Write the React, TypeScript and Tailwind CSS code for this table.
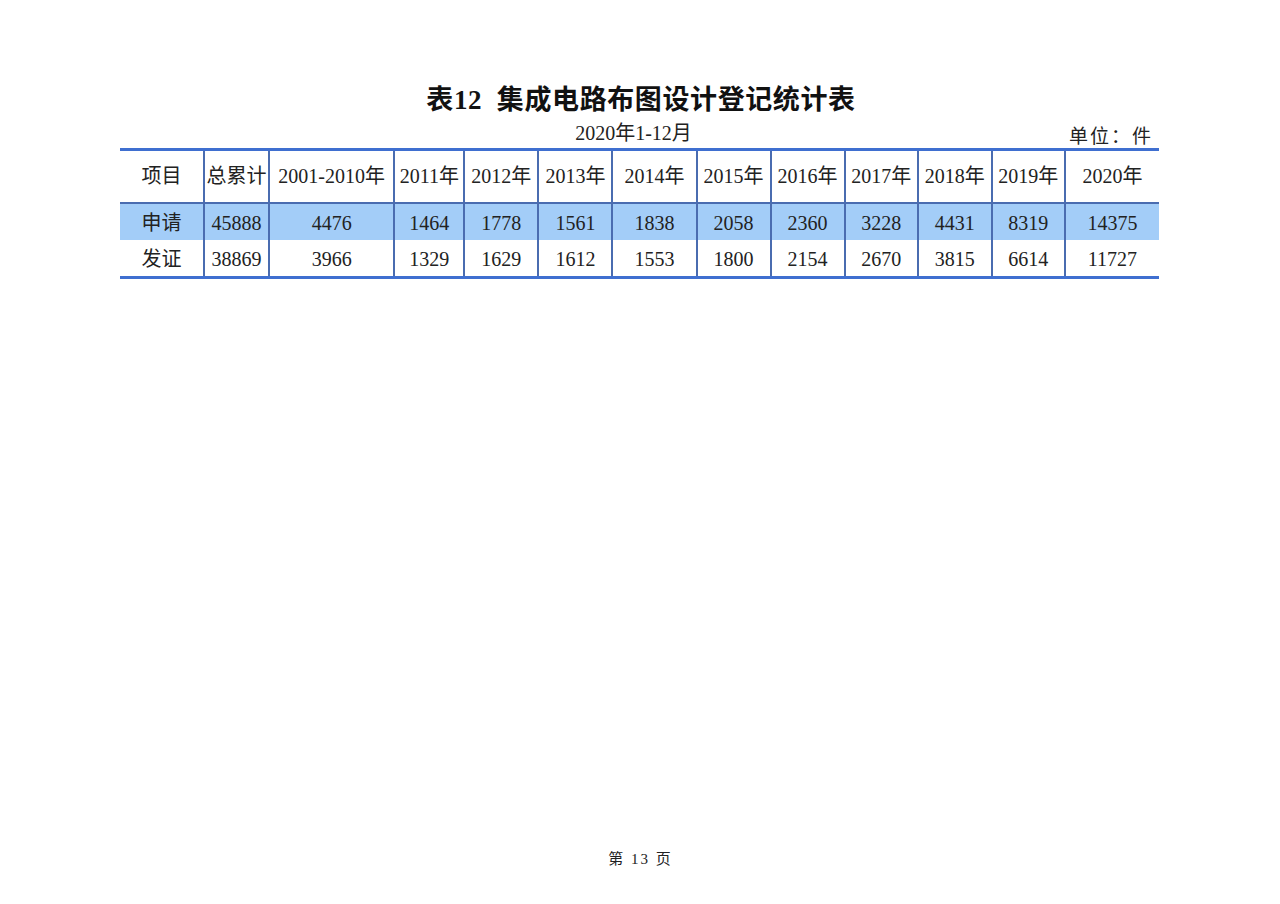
import React from 'react';

const serif = { fontFamily: '"Liberation Serif", "Noto Sans CJK SC", serif' };

const cols = [84, 65, 125, 70, 74, 74, 84, 74, 74, 73, 74, 73, 94];
const header = ['项目', '总累计', '2001-2010年', '2011年', '2012年', '2013年', '2014年', '2015年', '2016年', '2017年', '2018年', '2019年', '2020年'];
const rows = [
  ['申请', '45888', '4476', '1464', '1778', '1561', '1838', '2058', '2360', '3228', '4431', '8319', '14375'],
  ['发证', '38869', '3966', '1329', '1629', '1612', '1553', '1800', '2154', '2670', '3815', '6614', '11727'],
];

export default function App() {
  return (
    <div className="w-[1280px] h-[904px] bg-white text-[#222] flex flex-col" style={serif}>
      <div className="pt-[84px] text-center text-[27px] font-bold leading-[32px] tracking-[0.6px] text-[#111] pl-[2px]">
        表12&nbsp;&nbsp;集成电路布图设计登记统计表
      </div>
      <div className="ml-[120px] w-[1039px] grid grid-cols-[1fr_auto_1fr] items-end h-[32px]">
        <div />
        <div className="text-[20px] leading-[24px] pb-[3px] mr-[12px]">2020年1-12月</div>
        <div className="text-right text-[19px] leading-[22px] tracking-[2px] pr-[6px]">单位：件</div>
      </div>
      <table className="ml-[120px] w-[1039px] border-collapse table-fixed border-t-[3px] border-b-[3px] border-[#3f6fd0]">
        <colgroup>
          {cols.map((w, i) => (
            <col key={i} style={{ width: w }} />
          ))}
        </colgroup>
        <thead>
          <tr className="h-[53px]">
            {header.map((h, i) => (
              <th
                key={i}
                className={`font-normal text-[20px] whitespace-nowrap text-center p-0 ${i > 0 ? 'border-l-2 border-[#4a6cb0]' : ''}`}
              >
                {h}
              </th>
            ))}
          </tr>
        </thead>
        <tbody>
          {rows.map((r, ri) => (
            <tr key={ri} className={`${ri === 0 ? 'h-[37px] bg-[#a3cdf8] border-t-2 border-[#4a6cb0]' : 'h-[38px] bg-white'}`}>
              {r.map((c, i) => (
                <td
                  key={i}
                  className={`text-[20px] text-center p-0 pt-[2px] ${i > 0 ? 'border-l-2 border-[#4a6cb0]' : ''}`}
                >
                  {c}
                </td>
              ))}
            </tr>
          ))}
        </tbody>
      </table>
      <div className="flex-1" />
      <div className="text-center text-[15px] pb-[34px] pl-[1px] tracking-[2px]">第&nbsp;13&nbsp;页</div>
    </div>
  );
}
